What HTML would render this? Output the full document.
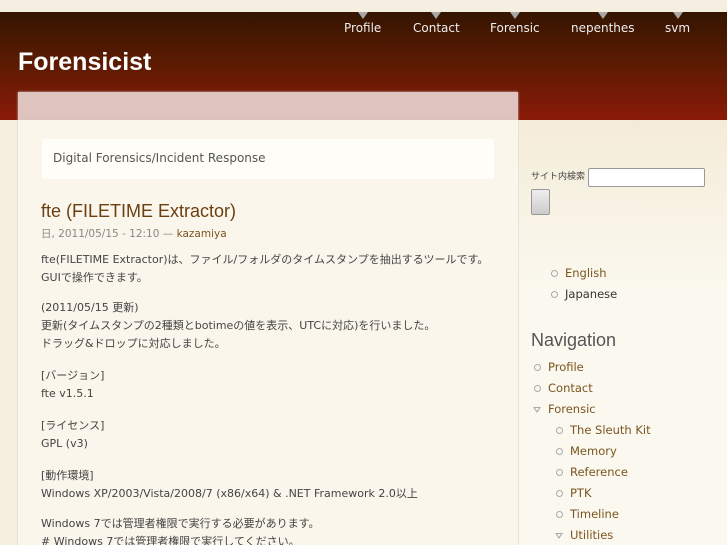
<!DOCTYPE html>
<html><head><meta charset="utf-8"><style>
*{margin:0;padding:0;box-sizing:border-box}
html{overflow:hidden;width:727px;height:545px}
body{width:727px;height:545px;overflow:hidden;background:#f6f0e0;font-family:"DejaVu Sans","Noto Sans CJK JP",sans-serif;font-size:11px;color:#444;position:relative}
.top{position:absolute;left:0;top:0;width:727px;height:12px;background:#f4efe0}
.hdr{position:absolute;left:0;top:12px;width:727px;height:108px;background:linear-gradient(#341500,#5a1a02 45%,#8a1a08)}
.nav{position:absolute;top:21px;font-size:12px;color:#eee;font-family:"DejaVu Sans",sans-serif}
.nav:before{content:"";position:absolute;left:50%;top:-9px;margin-left:-5px;border-left:5px solid transparent;border-right:5px solid transparent;border-top:7px solid #a8a8a8}
h1{position:absolute;left:18px;top:48px;font:bold 25px "Liberation Sans",sans-serif;color:#fff}
.main{position:absolute;left:18px;top:92px;width:500px;height:470px;background:#faf6ec;box-shadow:0 0 2px #ccc}
.mtop{height:28px;background:#dfc3be;border-bottom:1px solid #d6c4b8}
.slogan{position:absolute;left:24px;top:47px;width:452px;height:40px;background:#fffdf7;padding:12px 11px;font-size:12px;color:#555}
.post{position:absolute;left:23px;top:109px;width:470px}
h2{font:18px "Liberation Sans",sans-serif;color:#6b4010}
.meta{color:#888;font-size:10.5px;margin-top:4px}
.meta b{font-weight:normal;color:#7a5520}
p{margin-top:14px;line-height:18px;font-size:11px;color:#444}
p.a{margin-top:10px}
p.b{margin-top:12px}
.side{position:absolute;left:519px;top:120px;width:208px;height:425px;background:linear-gradient(#f4ecd8,#fbf8ef 40%,#fbf8ef)}
.srch{position:absolute;left:12px;top:48px;font-size:9px;line-height:19px}
.srch input{position:absolute;left:57px;top:0;width:117px;height:19px;border:1px solid #999;border-radius:2px;background:#fff}
.btn{position:absolute;left:12px;top:69px;width:19px;height:26px;border:1px solid #999;border-radius:2px;background:linear-gradient(#eee,#ccc)}
ul{list-style:none;position:absolute}
li{position:relative;height:21px;font-size:11.5px;color:#7a5520;padding-left:17px;white-space:nowrap}
li:before{content:"";position:absolute;left:3px;top:4px;width:5px;height:5px;border:1px solid #aaa;border-radius:50%}
li.t:before{border-radius:0;border:none;width:0;height:0;border-left:4px solid transparent;border-right:4px solid transparent;border-top:6px solid #aaa;top:5px;left:2px}
li.t:after{content:"";position:absolute;left:4px;top:6px;border-left:2px solid transparent;border-right:2px solid transparent;border-top:3px solid #fbf8ef}
h3{position:absolute;left:12px;top:210px;font:18px "Liberation Sans",sans-serif;color:#555}
</style></head><body>
<div class="top"></div>
<div class="hdr"></div>
<span class="nav" style="left:344px">Profile</span>
<span class="nav" style="left:413px">Contact</span>
<span class="nav" style="left:490px">Forensic</span>
<span class="nav" style="left:571px">nepenthes</span>
<span class="nav" style="left:665px">svm</span>
<h1>Forensicist</h1>
<div class="main"><div class="mtop"></div>
<div class="slogan">Digital Forensics/Incident Response</div>
<div class="post">
<h2>fte (FILETIME Extractor)</h2>
<div class="meta">日, 2011/05/15 - 12:10 — <b>kazamiya</b></div>
<p class="a">fte(FILETIME Extractor)は、ファイル/フォルダのタイムスタンプを抽出するツールです。<br>GUIで操作できます。</p>
<p class="b">(2011/05/15 更新)<br>更新(タイムスタンプの2種類とbotimeの値を表示、UTCに対応)を行いました。<br>ドラッグ&amp;ドロップに対応しました。</p>
<p>[バージョン]<br>fte v1.5.1</p>
<p>[ライセンス]<br>GPL (v3)</p>
<p>[動作環境]<br>Windows XP/2003/Vista/2008/7 (x86/x64) &amp; .NET Framework 2.0以上</p>
<p class="b">Windows 7では管理者権限で実行する必要があります。<br># Windows 7では管理者権限で実行してください。</p>
</div></div>
<div class="side">
<div class="srch">サイト内検索<input></div>
<div class="btn"></div>
<ul style="left:29px;top:146px"><li>English</li><li style="color:#333">Japanese</li></ul>
<h3>Navigation</h3>
<ul style="left:12px;top:240px"><li>Profile</li><li>Contact</li><li class="t">Forensic</li></ul>
<ul style="left:34px;top:303px"><li>The Sleuth Kit</li><li>Memory</li><li>Reference</li><li>PTK</li><li>Timeline</li><li class="t">Utilities</li></ul>
</div>
</body></html>
